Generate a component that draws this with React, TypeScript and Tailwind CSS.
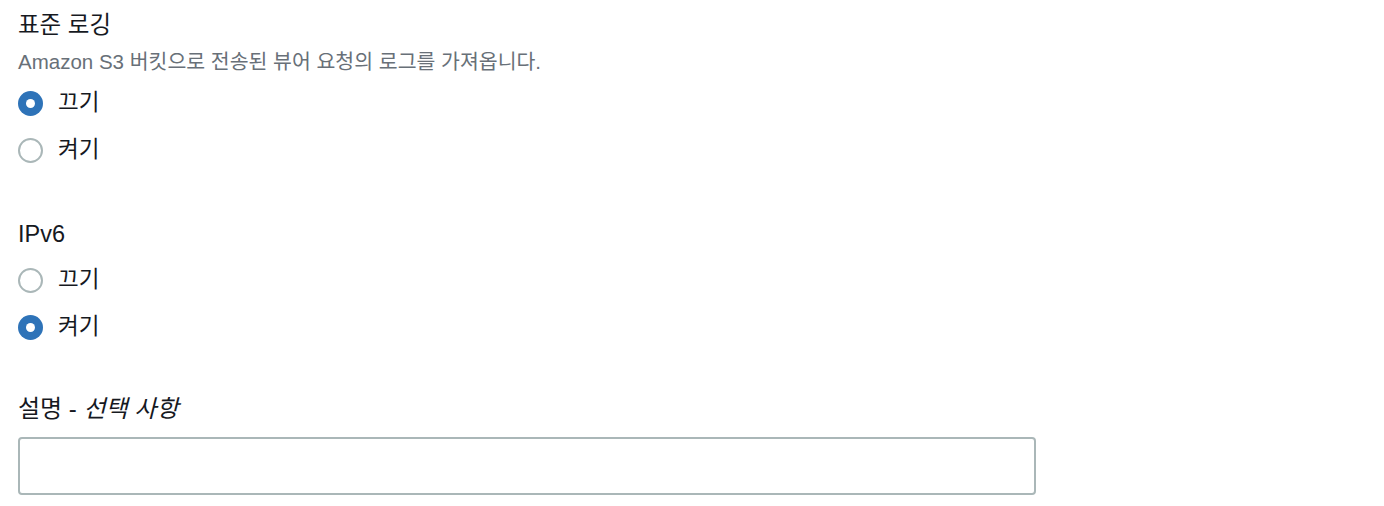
import { useState } from 'react';

const font = { fontFamily: '"Helvetica Neue", "Liberation Sans", "Noto Sans CJK KR", sans-serif' };

function Radio({ checked, label, onClick }: { checked: boolean; label: string; onClick: () => void }) {
  return (
    <label className="flex h-6 cursor-pointer items-center gap-[15px]" onClick={onClick}>
      {checked ? (
        <span className="flex h-[25px] w-[25px] items-center justify-center rounded-full bg-[#2e73b8]">
          <span className="h-[9px] w-[9px] rounded-full bg-white" />
        </span>
      ) : (
        <span className="h-[25px] w-[25px] rounded-full border-2 border-[#aab7b8] bg-white" />
      )}
      <span className="text-[22.5px] leading-6 text-[#16191f]">{label}</span>
    </label>
  );
}

function RadioGroup({ value, onChange }: { value: string; onChange: (v: string) => void }) {
  return (
    <div className="flex flex-col gap-[23px]">
      <Radio checked={value === 'off'} label="끄기" onClick={() => onChange('off')} />
      <Radio checked={value === 'on'} label="켜기" onClick={() => onChange('on')} />
    </div>
  );
}

export default function App() {
  const [logging, setLogging] = useState('off');
  const [ipv6, setIpv6] = useState('on');
  const [desc, setDesc] = useState('');

  return (
    <div className="min-h-screen bg-white pl-[18px] pt-[11px]" style={font}>
      {/* 표준 로깅 */}
      <h3 className="text-[23.5px] leading-[28px] text-[#16191f]">표준 로깅</h3>
      <p className="mt-[11px] text-[20.5px] leading-6 text-[#687078]">Amazon S3 버킷으로 전송된 뷰어 요청의 로그를 가져옵니다.</p>
      <div className="mt-[17px]">
        <RadioGroup value={logging} onChange={setLogging} />
      </div>

      {/* IPv6 */}
      <h3 className="mt-[58px] text-[23.5px] leading-[28px] text-[#16191f]">IPv6</h3>
      <div className="mt-[20px]">
        <RadioGroup value={ipv6} onChange={setIpv6} />
      </div>

      {/* 설명 */}
      <label className="mt-[56px] block text-[24px] leading-[28px] text-[#16191f]">
        설명 - <i>선택 사항</i>
      </label>
      <input
        value={desc}
        onChange={(e) => setDesc(e.target.value)}
        className="mt-[14px] block h-[58px] w-[1018px] rounded-[4px] border-2 border-[#aab7b8] bg-white px-3 text-[20px] outline-none focus:border-[#0073bb]"
      />
    </div>
  );
}
